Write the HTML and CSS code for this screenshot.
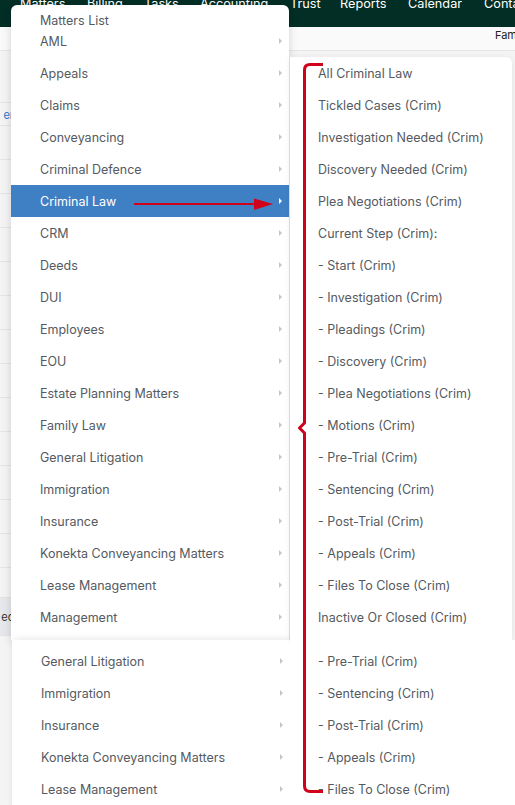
FILE: index.html
```html
<!DOCTYPE html>
<html>
<head>
<meta charset="utf-8">
<link rel="stylesheet" href="styles.css">
</head>
<body>
<div class="page">
  <nav class="topnav">
    <span class="nav-item n1">Matters</span>
    <span class="nav-item n2">Billing</span>
    <span class="nav-item n3">Tasks</span>
    <span class="nav-item n4">Accounting</span>
    <span class="nav-item n5">Trust</span>
    <span class="nav-item n6">Reports</span>
    <span class="nav-item n7">Calendar</span>
    <span class="nav-item n8">Conta</span>
  </nav>
  <div class="subbar"><span class="fam">Fam</span></div>
  <div class="content">
    <div class="left-strip">
      <div class="strip-row r1"></div>
      <div class="strip-row r2"><span class="strip-text blue">er</span></div>
      <div class="strip-row"></div>
      <div class="strip-row"></div>
      <div class="strip-row"></div>
      <div class="strip-row"></div>
      <div class="strip-row"></div>
      <div class="strip-row"></div>
      <div class="strip-row"></div>
      <div class="strip-row"></div>
      <div class="strip-row"></div>
      <div class="strip-row"></div>
      <div class="strip-row"></div>
      <div class="strip-row"></div>
      <div class="strip-row"></div>
      <div class="strip-row r-last"></div>
      <div class="strip-row band"><span class="strip-text">ec</span></div>
    </div>
  </div>
</div>

<div class="menu menu-main">
  <div class="menu-header">Matters List</div>
  <div class="mi">AML<span class="caret"></span></div>
  <div class="mi">Appeals<span class="caret"></span></div>
  <div class="mi">Claims<span class="caret"></span></div>
  <div class="mi">Conveyancing<span class="caret"></span></div>
  <div class="mi">Criminal Defence<span class="caret"></span></div>
  <div class="mi active">Criminal Law<span class="caret"></span></div>
  <div class="mi">CRM<span class="caret"></span></div>
  <div class="mi">Deeds<span class="caret"></span></div>
  <div class="mi">DUI<span class="caret"></span></div>
  <div class="mi">Employees<span class="caret"></span></div>
  <div class="mi">EOU<span class="caret"></span></div>
  <div class="mi">Estate Planning Matters<span class="caret"></span></div>
  <div class="mi">Family Law<span class="caret"></span></div>
  <div class="mi">General Litigation<span class="caret"></span></div>
  <div class="mi">Immigration<span class="caret"></span></div>
  <div class="mi">Insurance<span class="caret"></span></div>
  <div class="mi">Konekta Conveyancing Matters<span class="caret"></span></div>
  <div class="mi">Lease Management<span class="caret"></span></div>
  <div class="mi">Management<span class="caret"></span></div>
</div>

<div class="menu menu-main2">
  <div class="mi">General Litigation<span class="caret"></span></div>
  <div class="mi">Immigration<span class="caret"></span></div>
  <div class="mi">Insurance<span class="caret"></span></div>
  <div class="mi">Konekta Conveyancing Matters<span class="caret"></span></div>
  <div class="mi">Lease Management<span class="caret"></span></div>
</div>

<div class="menu menu-sub">
  <div class="si">All Criminal Law</div>
  <div class="si">Tickled Cases (Crim)</div>
  <div class="si">Investigation Needed (Crim)</div>
  <div class="si">Discovery Needed (Crim)</div>
  <div class="si">Plea Negotiations (Crim)</div>
  <div class="si">Current Step (Crim):</div>
  <div class="si">- Start (Crim)</div>
  <div class="si">- Investigation (Crim)</div>
  <div class="si">- Pleadings (Crim)</div>
  <div class="si">- Discovery (Crim)</div>
  <div class="si">- Plea Negotiations (Crim)</div>
  <div class="si">- Motions (Crim)</div>
  <div class="si">- Pre-Trial (Crim)</div>
  <div class="si">- Sentencing (Crim)</div>
  <div class="si">- Post-Trial (Crim)</div>
  <div class="si">- Appeals (Crim)</div>
  <div class="si">- Files To Close (Crim)</div>
  <div class="si">Inactive Or Closed (Crim)</div>
</div>

<div class="menu menu-sub2">
  <div class="si">- Pre-Trial (Crim)</div>
  <div class="si">- Sentencing (Crim)</div>
  <div class="si">- Post-Trial (Crim)</div>
  <div class="si">- Appeals (Crim)</div>
  <div class="si">- Files To Close (Crim)</div>
</div>

<svg class="annot" width="515" height="805" viewBox="0 0 515 805">
  <path d="M323 64.5 H310 Q304.5 64.5 304.5 70 V423 L299.5 428 L304.5 433 V786 Q304.5 791.5 310 791.5 H323" fill="none" stroke="#d0021b" stroke-width="3" stroke-linejoin="round"/>
  <line x1="134" y1="204" x2="258" y2="204" stroke="#d0021b" stroke-width="2"/>
  <polygon points="254,198.5 273,204 254,210" fill="#d0021b"/>
</svg>
</body>
</html>
```
FILE: styles.css
```css
* { box-sizing: border-box; }
html, body { margin: 0; padding: 0; }
body {
  width: 515px;
  height: 805px;
  overflow: hidden;
  font-family: Inter, "Noto Sans", sans-serif;
  background: #f6f6f6;
  position: relative;
}
.page { width: 515px; height: 805px; display: flex; flex-direction: column; }
.topnav {
  height: 27px;
  background: #032e25;
  position: relative;
  flex: none;
}
.nav-item {
  position: absolute;
  top: -2px;
  color: #fff;
  font-size: 12.7px;
  line-height: 12px;
  white-space: nowrap;
}
.n1 { left: 20px; } .n2 { left: 87px; } .n3 { left: 144px; } .n4 { left: 200px; }
.n5 { left: 290px; } .n6 { left: 340px; } .n7 { left: 408px; } .n8 { left: 484px; }
.subbar {
  height: 24px;
  background: #fafafa;
  border-bottom: 1px solid #e6e6e6;
  display: flex;
  justify-content: flex-end;
  flex: none;
  overflow: hidden;
}
.fam { font-size: 11px; color: #222; line-height: 12px; margin-top: 2px; margin-right: -2px; }
.content { flex: 1; background: #f4f4f4; display: flex; }
.left-strip { width: 12px; display: flex; flex-direction: column; }
.strip-row { height: 34px; border-bottom: 1px solid #e4e4e4; position: relative; flex: none; }
.strip-row.r1 { height: 52px; }
.strip-row.r2 { height: 23px; }
.strip-row.r-last { height: 30px; }
.strip-row.band { background: #e6e8eb; height: 38px; }
.strip-text { position: absolute; right: -2px; top: 12px; font-size: 11px; color: #333; }
.strip-text.blue { color: #2a78c5; top: 5px; }

.menu {
  position: absolute;
  background: #fff;
  box-shadow: 0 2px 10px rgba(0,0,0,0.16);
}
.menu-main {
  left: 11px; top: 5px; width: 278px; height: 635px;
  border-radius: 6px 6px 0 0;
}
.menu-main2 {
  left: 12px; top: 640px; width: 278px; height: 170px;
  padding-top: 5px;
  box-shadow: 2px 0 8px rgba(0,0,0,0.12);
}
.menu-sub {
  left: 290px; top: 57px; width: 222px; height: 583px;
  border-radius: 0 6px 0 0;
  box-shadow: 0 1px 6px rgba(0,0,0,0.08);
}
.menu-sub2 {
  left: 290px; top: 640px; width: 225px; height: 170px;
  padding-top: 5px;
  box-shadow: none;
}
.menu-header {
  height: 20px;
  line-height: 32px;
  padding-left: 29px;
  font-size: 12.5px;
  color: #555a61;
}
.mi, .si {
  height: 32px;
  line-height: 34px;
  font-size: 12.5px;
  color: #555a61;
  white-space: nowrap;
  position: relative;
}
.mi { padding-left: 29px; }
.si { padding-left: 28px; }
.mi.active { background: #3f80c4; color: #fff; }
.caret {
  position: absolute;
  right: 7px;
  top: 13px;
  width: 0; height: 0;
  border-top: 3px solid transparent;
  border-bottom: 3px solid transparent;
  border-left: 3px solid #c3c5c8;
}
.mi.active .caret { border-left-color: #fff; }
.annot { position: absolute; left: 0; top: 0; pointer-events: none; }
```
